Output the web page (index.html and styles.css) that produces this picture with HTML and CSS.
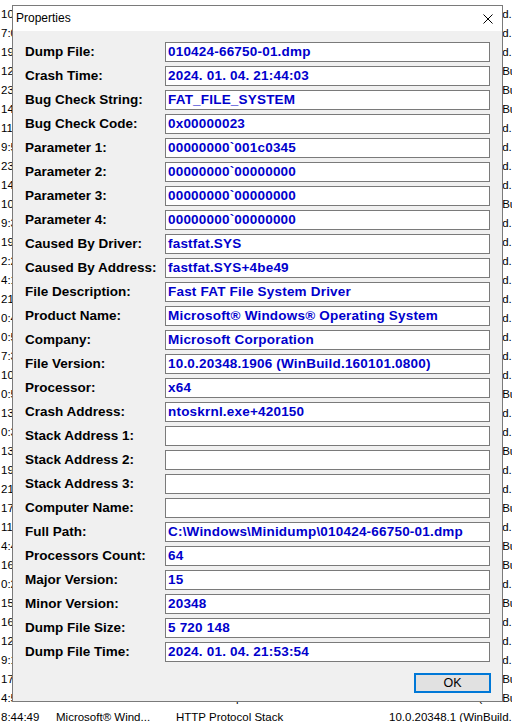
FILE: index.html
```html
<!DOCTYPE html>
<html lang="en">
<head>
  <meta charset="UTF-8" />
  <title>Properties</title>
  <link rel="stylesheet" href="styles.css">
</head>
<body>
  <!-- driver list behind the dialog -->
  <div class="list">
    <div class="list-row"><span class="col-time">10:31:22</span><span class="col-name">Microsoft® Wind...</span><span class="col-desc">NT File System Driver</span><span class="col-ver">10.0.20348.1 (WinBuild.160101.0800)</span></div>
    <div class="list-row"><span class="col-time">7:05:41</span><span class="col-name">Microsoft® Wind...</span><span class="col-desc">Kernel Security Support Provider</span><span class="col-ver">10.0.20348.1 (WinBuild.160101.0800)</span></div>
    <div class="list-row"><span class="col-time">19:12:08</span><span class="col-name">Microsoft® Wind...</span><span class="col-desc">Volume Manager Driver</span><span class="col-ver">10.0.20348.1 (WinBuild.160101.0800)</span></div>
    <div class="list-row"><span class="col-time">12:44:50</span><span class="col-name">Microsoft® Wind...</span><span class="col-desc">NT Kernel &amp; System</span><span class="col-ver">10.0.20348.1850 (WinBuild.160101.0800)</span></div>
    <div class="list-row"><span class="col-time">23:02:17</span><span class="col-name">Microsoft® Wind...</span><span class="col-desc">Hardware Abstraction Layer DLL</span><span class="col-ver">10.0.20348.1850 (WinBuild.160101.0800)</span></div>
    <div class="list-row"><span class="col-time">14:38:03</span><span class="col-name">Microsoft® Wind...</span><span class="col-desc">Kernel Configuration Manager</span><span class="col-ver">10.0.20348.1850 (WinBuild.160101.0800)</span></div>
    <div class="list-row"><span class="col-time">11:20:39</span><span class="col-name">Microsoft® Wind...</span><span class="col-desc">Plug and Play PCI Enumerator</span><span class="col-ver">10.0.20348.1 (WinBuild.160101.0800)</span></div>
    <div class="list-row"><span class="col-time">9:57:12</span><span class="col-name">Microsoft® Wind...</span><span class="col-desc">Partition driver</span><span class="col-ver">10.0.20348.1 (WinBuild.160101.0800)</span></div>
    <div class="list-row"><span class="col-time">23:41:55</span><span class="col-name">Microsoft® Wind...</span><span class="col-desc">Disk Driver</span><span class="col-ver">10.0.20348.1 (WinBuild.160101.0800)</span></div>
    <div class="list-row"><span class="col-time">14:09:30</span><span class="col-name">Microsoft® Wind...</span><span class="col-desc">Storport Driver</span><span class="col-ver">10.0.20348.1 (WinBuild.160101.0800)</span></div>
    <div class="list-row"><span class="col-time">10:16:44</span><span class="col-name">Microsoft® Wind...</span><span class="col-desc">Windows Management Instrumentation</span><span class="col-ver">10.0.20348.1850 (WinBuild.160101.0800)</span></div>
    <div class="list-row"><span class="col-time">9:33:21</span><span class="col-name">Microsoft® Wind...</span><span class="col-desc">ACPI Driver for NT</span><span class="col-ver">10.0.20348.1 (WinBuild.160101.0800)</span></div>
    <div class="list-row"><span class="col-time">19:50:06</span><span class="col-name">Microsoft® Wind...</span><span class="col-desc">Mount Point Manager</span><span class="col-ver">10.0.20348.1 (WinBuild.160101.0800)</span></div>
    <div class="list-row"><span class="col-time">2:27:48</span><span class="col-name">Microsoft® Wind...</span><span class="col-desc">Filter Manager</span><span class="col-ver">10.0.20348.1 (WinBuild.160101.0800)</span></div>
    <div class="list-row"><span class="col-time">4:13:35</span><span class="col-name">Microsoft® Wind...</span><span class="col-desc">Cluster Disk Driver</span><span class="col-ver">10.0.20348.1 (WinBuild.160101.0800)</span></div>
    <div class="list-row"><span class="col-time">21:08:59</span><span class="col-name">Microsoft® Wind...</span><span class="col-desc">Common Log File System Driver</span><span class="col-ver">10.0.20348.1 (WinBuild.160101.0800)</span></div>
    <div class="list-row"><span class="col-time">0:45:14</span><span class="col-name">Microsoft® Wind...</span><span class="col-desc">Kernel Mode Driver Frameworks</span><span class="col-ver">10.0.20348.1 (WinBuild.160101.0800)</span></div>
    <div class="list-row"><span class="col-time">0:58:27</span><span class="col-name">Microsoft® Wind...</span><span class="col-desc">Windows Trusted Runtime Interface</span><span class="col-ver">10.0.20348.1 (WinBuild.160101.0800)</span></div>
    <div class="list-row"><span class="col-time">7:36:02</span><span class="col-name">Microsoft® Wind...</span><span class="col-desc">Volume Shadow Copy driver</span><span class="col-ver">10.0.20348.1 (WinBuild.160101.0800)</span></div>
    <div class="list-row"><span class="col-time">10:22:18</span><span class="col-name">Microsoft® Wind...</span><span class="col-desc">Virtual Drive Root Enumerator</span><span class="col-ver">10.0.20348.1 (WinBuild.160101.0800)</span></div>
    <div class="list-row"><span class="col-time">0:51:43</span><span class="col-name">Microsoft® Wind...</span><span class="col-desc">Volume Information Driver</span><span class="col-ver">10.0.20348.1850 (WinBuild.160101.0800)</span></div>
    <div class="list-row"><span class="col-time">13:19:26</span><span class="col-name">Microsoft® Wind...</span><span class="col-desc">NDIS 6.20 driver</span><span class="col-ver">10.0.20348.1 (WinBuild.160101.0800)</span></div>
    <div class="list-row"><span class="col-time">0:34:09</span><span class="col-name">Microsoft® Wind...</span><span class="col-desc">TCP/IP Driver</span><span class="col-ver">10.0.20348.1 (WinBuild.160101.0800)</span></div>
    <div class="list-row"><span class="col-time">13:47:52</span><span class="col-name">Microsoft® Wind...</span><span class="col-desc">Network Store Interface Service</span><span class="col-ver">10.0.20348.1850 (WinBuild.160101.0800)</span></div>
    <div class="list-row"><span class="col-time">19:05:37</span><span class="col-name">Microsoft® Wind...</span><span class="col-desc">WFP NDIS 6.30 Lightweight Filter</span><span class="col-ver">10.0.20348.1 (WinBuild.160101.0800)</span></div>
    <div class="list-row"><span class="col-time">21:29:04</span><span class="col-name">Microsoft® Wind...</span><span class="col-desc">Ancillary Function Driver</span><span class="col-ver">10.0.20348.1 (WinBuild.160101.0800)</span></div>
    <div class="list-row"><span class="col-time">17:14:46</span><span class="col-name">Microsoft® Wind...</span><span class="col-desc">NetBT Driver</span><span class="col-ver">10.0.20348.1850 (WinBuild.160101.0800)</span></div>
    <div class="list-row"><span class="col-time">11:52:31</span><span class="col-name">Microsoft® Wind...</span><span class="col-desc">Remote Desktop Bus Driver</span><span class="col-ver">10.0.20348.1 (WinBuild.160101.0800)</span></div>
    <div class="list-row"><span class="col-time">4:40:15</span><span class="col-name">Microsoft® Wind...</span><span class="col-desc">Null Driver</span><span class="col-ver">10.0.20348.1850 (WinBuild.160101.0800)</span></div>
    <div class="list-row"><span class="col-time">16:03:58</span><span class="col-name">Microsoft® Wind...</span><span class="col-desc">Beep Driver</span><span class="col-ver">10.0.20348.1850 (WinBuild.160101.0800)</span></div>
    <div class="list-row"><span class="col-time">0:26:40</span><span class="col-name">Microsoft® Wind...</span><span class="col-desc">Basic Display Driver</span><span class="col-ver">10.0.20348.1 (WinBuild.160101.0800)</span></div>
    <div class="list-row"><span class="col-time">15:11:23</span><span class="col-name">Microsoft® Wind...</span><span class="col-desc">Basic Render Driver</span><span class="col-ver">10.0.20348.1850 (WinBuild.160101.0800)</span></div>
    <div class="list-row"><span class="col-time">16:37:07</span><span class="col-name">Microsoft® Wind...</span><span class="col-desc">Win32k Driver</span><span class="col-ver">10.0.20348.1 (WinBuild.160101.0800)</span></div>
    <div class="list-row"><span class="col-time">12:55:49</span><span class="col-name">Microsoft® Wind...</span><span class="col-desc">Named Pipe File System</span><span class="col-ver">10.0.20348.1 (WinBuild.160101.0800)</span></div>
    <div class="list-row"><span class="col-time">9:18:33</span><span class="col-name">Microsoft® Wind...</span><span class="col-desc">Mailslot driver</span><span class="col-ver">10.0.20348.1 (WinBuild.160101.0800)</span></div>
    <div class="list-row"><span class="col-time">17:42:11</span><span class="col-name">Microsoft® Wind...</span><span class="col-desc">Fast FAT File System Driver</span><span class="col-ver">10.0.20348.1850 (WinBuild.160101.0800)</span></div>
    <div class="list-row"><span class="col-time">4:53:06</span><span class="col-name">Microsoft® Wind...</span><span class="col-desc">DirectX Graphics MMS</span><span class="col-ver">10.0.20348.1850 (WinBuild.160101.0800)</span></div>
    <div class="list-row"><span class="col-time">8:44:49</span><span class="col-name">Microsoft® Wind...</span><span class="col-desc">HTTP Protocol Stack</span><span class="col-ver">10.0.20348.1 (WinBuild.160101.0800)</span></div>
  </div>

  <div class="dialog">
    <div class="title-bar">
      <span class="title">Properties</span>
      <svg class="close-icon" viewBox="0 0 10 10">
        <path d="M0.5,0.5 L9.5,9.5 M9.5,0.5 L0.5,9.5" />
      </svg>
    </div>

    <div class="dialog-body">
      <div class="fields">
        <span class="label">Dump File:</span><div class="value">010424-66750-01.dmp</div>
        <span class="label">Crash Time:</span><div class="value">2024. 01. 04. 21:44:03</div>
        <span class="label">Bug Check String:</span><div class="value">FAT_FILE_SYSTEM</div>
        <span class="label">Bug Check Code:</span><div class="value">0x00000023</div>
        <span class="label">Parameter 1:</span><div class="value">00000000`001c0345</div>
        <span class="label">Parameter 2:</span><div class="value">00000000`00000000</div>
        <span class="label">Parameter 3:</span><div class="value">00000000`00000000</div>
        <span class="label">Parameter 4:</span><div class="value">00000000`00000000</div>
        <span class="label">Caused By Driver:</span><div class="value">fastfat.SYS</div>
        <span class="label">Caused By Address:</span><div class="value">fastfat.SYS+4be49</div>
        <span class="label">File Description:</span><div class="value">Fast FAT File System Driver</div>
        <span class="label">Product Name:</span><div class="value">Microsoft® Windows® Operating System</div>
        <span class="label">Company:</span><div class="value">Microsoft Corporation</div>
        <span class="label">File Version:</span><div class="value">10.0.20348.1906 (WinBuild.160101.0800)</div>
        <span class="label">Processor:</span><div class="value">x64</div>
        <span class="label">Crash Address:</span><div class="value">ntoskrnl.exe+420150</div>
        <span class="label">Stack Address 1:</span><div class="value"></div>
        <span class="label">Stack Address 2:</span><div class="value"></div>
        <span class="label">Stack Address 3:</span><div class="value"></div>
        <span class="label">Computer Name:</span><div class="value"></div>
        <span class="label">Full Path:</span><div class="value">C:\Windows\Minidump\010424-66750-01.dmp</div>
        <span class="label">Processors Count:</span><div class="value">64</div>
        <span class="label">Major Version:</span><div class="value">15</div>
        <span class="label">Minor Version:</span><div class="value">20348</div>
        <span class="label">Dump File Size:</span><div class="value">5 720 148</div>
        <span class="label">Dump File Time:</span><div class="value">2024. 01. 04. 21:53:54</div>
      </div>

      <div class="dialog-footer">
        <button class="ok-btn">OK</button>
      </div>
    </div>
  </div>
</body>
</html>
```

FILE: styles.css
```css
* {
  margin: 0;
  padding: 0;
  box-sizing: border-box;
}
body {
  position: relative;
  width: 512px;
  height: 722px;
  overflow: hidden;
  background: #ffffff;
  font-family: "Liberation Sans", Arial, sans-serif;
}

/* list in the background */
.list {
  padding-top: 5px;
}
.list-row {
  display: flex;
  height: 19px;
  line-height: 19px;
  font-size: 11.5px;
  color: #000;
  white-space: nowrap;
}
.col-time {
  width: 56px;
  padding-left: 1px;
  flex-shrink: 0;
}
.col-name {
  width: 120px;
  flex-shrink: 0;
}
.col-desc {
  width: 213px;
  flex-shrink: 0;
  overflow: hidden;
}
.col-ver {
  flex-shrink: 0;
}

/* properties dialog */
.dialog {
  position: absolute;
  left: 12px;
  top: 5px;
  width: 491px;
  border: 1px solid #7a7a7a;
  background: #f0f0f0;
}
.title-bar {
  height: 25px;
  background: #ffffff;
  display: flex;
  align-items: center;
  justify-content: space-between;
  padding: 0 9px 2px 3px;
}
.title {
  font-size: 12px;
  color: #000;
}
.close-icon {
  width: 10px;
  height: 10px;
  margin-top: 2px;
  stroke: #000;
  stroke-width: 1;
  fill: none;
}
.dialog-body {
  padding: 11px 12px 8px;
}
.fields {
  display: grid;
  grid-template-columns: 140px 325px;
  row-gap: 4px;
}
.label {
  font-size: 13.5px;
  font-weight: bold;
  line-height: 20px;
  color: #000;
  white-space: nowrap;
}
.value {
  height: 20px;
  border: 1px solid #7a7a7a;
  background: #ffffff;
  color: #0000cc;
  font-size: 13.5px;
  font-weight: bold;
  letter-spacing: 0.2px;
  line-height: 18px;
  padding-left: 2px;
  white-space: nowrap;
  overflow: hidden;
}
.dialog-footer {
  display: flex;
  justify-content: flex-end;
  margin-top: 11px;
  margin-right: -1px;
}
.ok-btn {
  width: 77px;
  height: 20px;
  border: 2px solid #0078d7;
  background: #e1e1e1;
  font-family: "Liberation Sans", Arial, sans-serif;
  font-size: 12.5px;
  color: #000;
}
```
